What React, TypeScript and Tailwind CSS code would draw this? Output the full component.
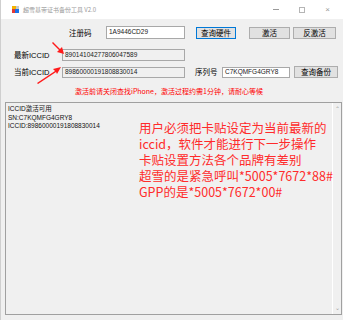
import { FC } from "react";

const cjk = "font-['Noto_Sans_CJK_SC','Noto_Sans',sans-serif]";
const latin = "font-['Liberation_Sans','Noto_Sans_CJK_SC',sans-serif]";

const Btn: FC<{ label: string; w: string; focus?: boolean }> = ({ label, w, focus }) => (
  <div
    className={`${w} h-[12px] flex items-center justify-center bg-[#e1e1e1] border text-[7.5px] leading-none text-black ${
      focus ? "border-[#0078d7]" : "border-[#adadad]"
    }`}
  >
    {label}
  </div>
);

const Box: FC<{ value: string; w: string; h: string; readOnly?: boolean }> = ({ value, w, h, readOnly }) => (
  <div
    className={`${w} ${h} flex items-center px-[2px] border border-[#a8a8a8] ${latin} text-[6.5px] leading-none text-[#222] ${
      readOnly ? "bg-[#f0f0f0]" : "bg-white"
    }`}
  >
    {value}
  </div>
);

const AppIcon = () => (
  <svg width="7" height="7" viewBox="0 0 7 7">
    <rect x="0" y="0" width="4" height="4" fill="#f4b400" />
    <rect x="3" y="3" width="4" height="4" fill="#1a73e8" />
    <rect x="0" y="3" width="3" height="4" fill="#e53935" />
    <rect x="4" y="0" width="3" height="3" fill="#c8c8c8" />
  </svg>
);

const Arrows = () => (
  <svg className="absolute left-0 top-0 pointer-events-none" width="343" height="320">
    <polygon points="51,43 52,42 59,49 61,47 63,54 56,52 58,50" fill="#ff1a1a" />
    <polygon points="37,84 36,83 54,71 52,69 60,67 56,74 55,72" fill="#ff1a1a" />
  </svg>
);

export default function App() {
  return (
    <div className={`relative w-[343px] h-[320px] bg-[#f0f0f0] border-l border-[#cfcfcf] overflow-hidden ${cjk}`}>
      {/* title bar */}
      <div className="h-[19px] bg-white flex items-center">
        <div className="ml-[11px] flex items-center">
          <AppIcon />
        </div>
        <span className="ml-[4px] text-[6px] leading-none text-[#9a9a9a]">超雪基带证书备份工具 V2.0</span>
        <div className="ml-auto flex items-center text-[#9a9a9a]">
          <div className="w-[6px] h-[1px] bg-[#9a9a9a] mr-[20px]" />
          <div className="w-[6px] h-[6px] border border-[#b5b5b5] mr-[20px]" />
          <span className={`${latin} text-[8px] leading-none mr-[13px]`}>×</span>
        </div>
      </div>

      {/* row 1 */}
      <div className="mt-[7px] h-[13px] flex items-center">
        <div className="ml-[68px] w-[37px] text-[7.5px] leading-none text-black">注册码</div>
        <Box value="1A9446CD29" w="w-[79px]" h="h-[13px]" />
        <div className="ml-[11px]">
          <Btn label="查询硬件" w="w-[40px]" focus />
        </div>
        <div className="ml-[13px]">
          <Btn label="激活" w="w-[41px]" />
        </div>
        <div className="ml-[3px]">
          <Btn label="反激活" w="w-[43px]" />
        </div>
      </div>

      {/* row 2 */}
      <div className="mt-[10px] h-[12px] flex items-center">
        <div className="ml-[13px] w-[48px] text-[7.5px] leading-none text-black">
          最新<span className={latin}>ICCID</span>
        </div>
        <Box value="89014104277806047589" w="w-[123px]" h="h-[12px]" readOnly />
      </div>

      {/* row 3 */}
      <div className="mt-[5px] h-[12px] flex items-center">
        <div className="ml-[13px] w-[48px] text-[7.5px] leading-none text-black">
          当前<span className={latin}>ICCID</span>
        </div>
        <Box value="89860000191808830014" w="w-[123px]" h="h-[11px]" readOnly />
        <div className="ml-[10px] w-[27px] text-[7.5px] leading-none text-black">序列号</div>
        <Box value="C7KQMFG4GRY8" w="w-[68px]" h="h-[11px]" />
        <div className="ml-[4px]">
          <Btn label="查询备份" w="w-[44px]" />
        </div>
      </div>

      {/* notice */}
      <div className="mt-[9px] ml-[74px] h-[9px] text-[7px] leading-[9px] text-[#ff0000] whitespace-nowrap">
        激活前请关闭查找iPhone，激活过程约需1分钟，请耐心等候
      </div>

      {/* log box */}
      <div className="relative mt-[6px] ml-[4px] w-[337px] h-[213px] flex border border-[#a0a0a0] bg-[#f0f0f0]">
        <div className={`flex-1 pl-[2px] pt-[1px] ${latin} text-[6.5px] leading-[8.5px] text-[#111]`}>
          <div>
            ICCID<span className={cjk}>激活可用</span>
          </div>
          <div>SN:C7KQMFG4GRY8</div>
          <div>ICCID:89860000191808830014</div>
        </div>
        <div className="w-[9px] flex flex-col items-center justify-between border-l border-white py-[3px] text-[6px] leading-none text-[#a0a0a0]">
          <span>⌃</span>
          <span>⌄</span>
        </div>
        <div className="absolute left-[133px] top-[17px] text-[12.5px] leading-[16px] text-[#ff2b2b] whitespace-nowrap">
          <div>用户必须把卡贴设定为当前最新的</div>
          <div>iccid，软件才能进行下一步操作</div>
          <div>卡贴设置方法各个品牌有差别</div>
          <div>超雪的是紧急呼叫*5005*7672*88#</div>
          <div>GPP的是*5005*7672*00#</div>
        </div>
      </div>

      <Arrows />
    </div>
  );
}
